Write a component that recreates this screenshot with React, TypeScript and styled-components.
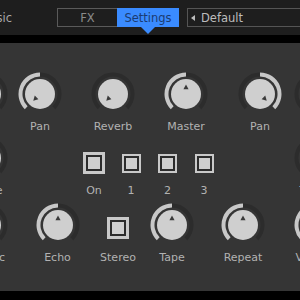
import React from 'react';
import styled, { createGlobalStyle } from 'styled-components';

const GlobalStyle = createGlobalStyle`
  html, body {
    margin: 0;
    padding: 0;
    background: #000;
  }
  body {
    font-family: 'DejaVu Sans', 'Liberation Sans', sans-serif;
  }
`;

type KnobSpec = { kind: 'knob'; label: string; value: number; from?: number; ml: number };
type BoxSpec = { kind: 'box'; label: string; big?: boolean; ml: number; w: number; pt: number };
type Spec = KnobSpec | BoxSpec;

// knobs on the edges are cut by the window, so their positions are hand-tuned
const rows: { h: number; items: Spec[] }[] = [
    {
        h: 64,
        items: [
            { kind: 'knob', label: '', value: -135, ml: -36 },
            { kind: 'knob', label: 'Pan', value: -135, from: 0, ml: 10 },
            { kind: 'knob', label: 'Reverb', value: -135, ml: 29 },
            { kind: 'knob', label: 'Master', value: 0, ml: 29 },
            { kind: 'knob', label: 'Pan', value: 135, from: 0, ml: 30 },
            { kind: 'knob', label: '', value: -135, ml: 12 },
        ],
    },
    {
        h: 67,
        items: [
            { kind: 'knob', label: 'Phase', value: -135, ml: -36 },
            { kind: 'box', label: 'On', big: true, ml: 71, w: 30, pt: 10 },
            { kind: 'box', label: '1', ml: 7, w: 30, pt: 10 },
            { kind: 'box', label: '2', ml: 6.5, w: 30, pt: 10 },
            { kind: 'box', label: '3', ml: 6.5, w: 30, pt: 10 },
            { kind: 'knob', label: 'Treble', value: -135, ml: 75 },
        ],
    },
    {
        h: 62,
        items: [
            { kind: 'knob', label: 'Classic', value: -135, ml: -36 },
            { kind: 'knob', label: 'Echo', value: 0, ml: 27.5 },
            { kind: 'box', label: 'Stereo', big: true, ml: 16.5, w: 44, pt: 6 },
            { kind: 'knob', label: 'Tape', value: 0, ml: 10 },
            { kind: 'knob', label: 'Repeat', value: 0, ml: 27 },
            { kind: 'knob', label: 'Volume', value: 0, ml: 29 },
        ],
    },
];

function polar (r: number, deg: number): [number, number] {
    const a = (deg * Math.PI) / 180;
    return [22 + r * Math.sin(a), 22 - r * Math.cos(a)];
}

function arc (a0: number, a1: number, r: number): string {
    const [x0, y0] = polar(r, a0);
    const [x1, y1] = polar(r, a1);
    const large = a1 - a0 > 180 ? 1 : 0;
    return `M ${x0} ${y0} A ${r} ${r} 0 ${large} 1 ${x1} ${y1}`;
}

function Knob ({ value, from = -135 }: { value: number; from?: number }): JSX.Element {
    const tip = polar(9.5, value);
    const b1 = polar(5.5, value - 28);
    const b2 = polar(5.5, value + 28);
    return (
        <svg width='44' height='44' viewBox='0 0 44 44'>
            <path d={arc(-135, 135, 19.5)} stroke='#2c2c2c' strokeWidth='4' fill='none' />
            {value !== from && (
                <path d={arc(Math.min(from, value), Math.max(from, value), 19.5)} stroke='#c8c8c8' strokeWidth='4' fill='none' />
            )}
            <circle cx='22' cy='22' r='15' fill='#cfcfcf' />
            <polygon points={`${tip[0]},${tip[1]} ${b1[0]},${b1[1]} ${b2[0]},${b2[1]}`} fill='#3a3a3a' />
        </svg>
    );
}

export default function App (): JSX.Element {
    return (
        <Screen>
            <GlobalStyle />
            <TopBar>
                <ModeLabel>Music</ModeLabel>
                <Tabs>
                    <FxTab>FX</FxTab>
                    <SettingsTab>Settings</SettingsTab>
                </Tabs>
                <Preset>
                    <PrevArrow />
                    <PresetName>Default</PresetName>
                </Preset>
            </TopBar>
            <Panel>
                {rows.map((row, ri) => (
                    <Row key={ri} $h={row.h}>
                        {row.items.map((it, i) => (
                            <Cell key={i} $ml={it.ml} $w={it.kind === 'box' ? it.w : 44}>
                                {it.kind === 'knob' ? (
                                    <Knob value={it.value} from={it.from} />
                                ) : (
                                    <BoxSlot $pt={it.pt}>
                                        <Toggle $big={!!it.big} />
                                    </BoxSlot>
                                )}
                                <Label>{it.label}</Label>
                            </Cell>
                        ))}
                    </Row>
                ))}
            </Panel>
        </Screen>
    );
}

const Screen = styled.div`
    width: 300px;
    height: 300px;
    overflow: hidden;
    background: #000;
    display: flex;
    flex-direction: column;
`;

const TopBar = styled.div`
    flex: none;
    height: 35px;
    background: #1e1e1e;
    display: flex;
    align-items: center;
    font-size: 11.5px;
`;

const ModeLabel = styled.div`
    flex: none;
    width: 33px;
    margin-left: -21px;
    text-align: right;
    color: #a8a8a8;
`;

const Tabs = styled.div`
    flex: none;
    display: flex;
    width: 122px;
    height: 19px;
    margin-left: 45px;
`;

const FxTab = styled.div`
    box-sizing: border-box;
    width: 60px;
    display: flex;
    align-items: center;
    justify-content: center;
    border: 1px solid #5a5a5a;
    border-right: none;
    color: #8a8a8a;
`;

const SettingsTab = styled.div`
    position: relative;
    flex: 1;
    display: flex;
    align-items: center;
    justify-content: center;
    background: #3a8bff;
    color: #1a3b72;

    &::after {
        content: '';
        position: absolute;
        top: 100%;
        left: 50%;
        margin-left: -7px;
        border-left: 7px solid transparent;
        border-right: 7px solid transparent;
        border-top: 7px solid #3a8bff;
    }
`;

const Preset = styled.div`
    flex: none;
    box-sizing: border-box;
    width: 130px;
    height: 19px;
    margin-left: 8px;
    padding-left: 3px;
    display: flex;
    align-items: center;
    border: 1px solid #555;
`;

const PrevArrow = styled.div`
    width: 0;
    height: 0;
    border-top: 3.5px solid transparent;
    border-bottom: 3.5px solid transparent;
    border-right: 4px solid #bcbcbc;
`;

const PresetName = styled.span`
    margin-left: 6px;
    color: #bcbcbc;
`;

const Panel = styled.div`
    flex: none;
    box-sizing: border-box;
    height: 248px;
    margin-top: 8px;
    padding-top: 29px;
    background: #353535;
    display: flex;
    flex-direction: column;
`;

const Row = styled.div<{ $h: number }>`
    flex: none;
    height: ${(p) => p.$h}px;
    display: flex;
    align-items: flex-start;
`;

const Cell = styled.div<{ $ml: number; $w: number }>`
    flex: none;
    width: ${(p) => p.$w}px;
    margin-left: ${(p) => p.$ml}px;
    display: flex;
    flex-direction: column;
    align-items: center;

    svg {
        display: block;
        flex: none;
    }
`;

const BoxSlot = styled.div<{ $pt: number }>`
    box-sizing: border-box;
    height: 44px;
    padding-top: ${(p) => p.$pt}px;
    display: flex;
    align-items: center;
    justify-content: center;
`;

const Toggle = styled.div<{ $big: boolean }>`
    box-sizing: border-box;
    width: ${(p) => (p.$big ? 22 : 19)}px;
    height: ${(p) => (p.$big ? 22 : 19)}px;
    border: ${(p) => (p.$big ? 3 : 2)}px solid #c9c9c9;
    background: #cfcfcf;
    box-shadow: inset 0 0 0 2px #2c2c2c;
`;

const Label = styled.div`
    height: 14px;
    margin-top: 4px;
    line-height: 14px;
    font-size: 11px;
    white-space: nowrap;
    color: #b2b2b2;
`;
